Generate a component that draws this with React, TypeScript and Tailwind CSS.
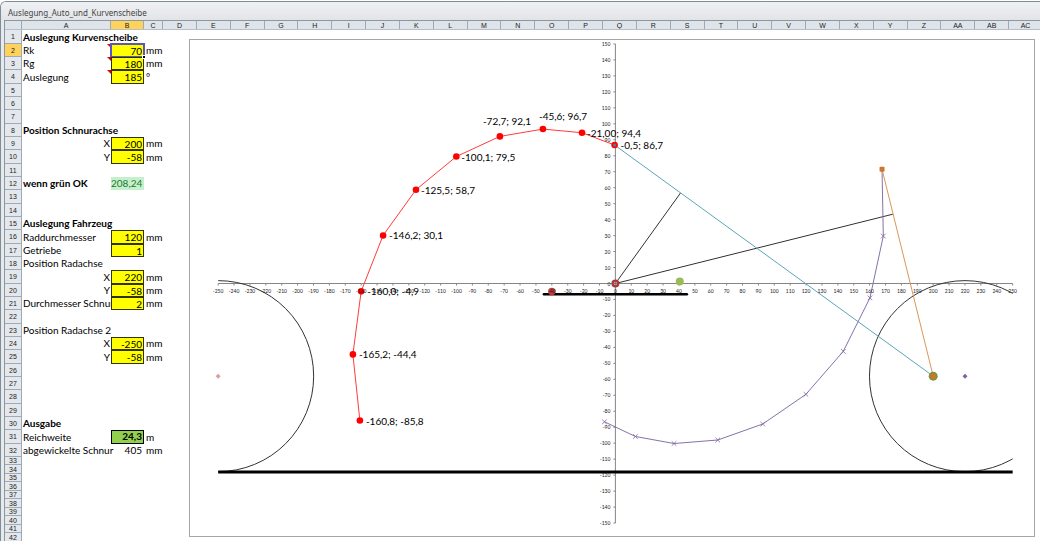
import { useState } from 'react'
import clsx from 'clsx'

type Row = {
    label?: string
    kind?: 'title' | 'axis' | 'clip'
    value?: string
    cell?: 'input' | 'ok' | 'result' | 'plain'
    unit?: string
    note?: boolean
}

const rows: Record<number, Row> = {
    1: { label: 'Auslegung Kurvenscheibe', kind: 'title' },
    2: { label: 'Rk', value: '70', cell: 'input', unit: 'mm', note: true },
    3: { label: 'Rg', value: '180', cell: 'input', unit: 'mm', note: true },
    4: { label: 'Auslegung', value: '185', cell: 'input', unit: '°', note: true },
    8: { label: 'Position Schnurachse', kind: 'title' },
    9: { label: 'X', kind: 'axis', value: '200', cell: 'input', unit: 'mm' },
    10: { label: 'Y', kind: 'axis', value: '-58', cell: 'input', unit: 'mm' },
    12: { label: 'wenn grün OK', kind: 'title', value: '208,24', cell: 'ok' },
    15: { label: 'Auslegung Fahrzeug', kind: 'title' },
    16: { label: 'Raddurchmesser', value: '120', cell: 'input', unit: 'mm' },
    17: { label: 'Getriebe', value: '1', cell: 'input' },
    18: { label: 'Position Radachse' },
    19: { label: 'X', kind: 'axis', value: '220', cell: 'input', unit: 'mm' },
    20: { label: 'Y', kind: 'axis', value: '-58', cell: 'input', unit: 'mm' },
    21: { label: 'Durchmesser Schnura', kind: 'clip', value: '2', cell: 'input', unit: 'mm' },
    23: { label: 'Position Radachse 2' },
    24: { label: 'X', kind: 'axis', value: '-250', cell: 'input', unit: 'mm' },
    25: { label: 'Y', kind: 'axis', value: '-58', cell: 'input', unit: 'mm' },
    30: { label: 'Ausgabe', kind: 'title' },
    31: { label: 'Reichweite', value: '24,3', cell: 'result', unit: 'm' },
    32: { label: 'abgewickelte Schnur', value: '405', cell: 'plain', unit: 'mm' },
}

const rowNumbers = Array.from({ length: 42 }, (_, i) => i + 1)
const wideColumns = [...'DEFGHIJKLMNOPQRSTUVWXYZ', 'AA', 'AB', 'AC']

// chart units -> svg units
const px = (x: number) => 426.4 + x * 1.589
const py = (y: number) => 244.5 - y * 1.597
const toPoints = (points: number[][]) => points.map(([x, y]) => `${px(x)},${py(y)}`).join(' ')

const xTicks = Array.from({ length: 51 }, (_, i) => -250 + i * 10)
const yTicks = Array.from({ length: 31 }, (_, i) => -150 + i * 10)

const redCurve = [
    { x: -160.8, y: -85.8, text: '-160,8; -85,8', dx: 6, dy: 4 },
    { x: -165.2, y: -44.4, text: '-165,2; -44,4', dx: 6, dy: 4 },
    { x: -160, y: -4.9, text: '-160,0; -4,9', dx: 6, dy: 4 },
    { x: -146.2, y: 30.1, text: '-146,2; 30,1', dx: 6, dy: 4 },
    { x: -125.5, y: 58.7, text: '-125,5; 58,7', dx: 5, dy: 4 },
    { x: -100.1, y: 79.5, text: '-100,1; 79,5', dx: 5, dy: 4 },
    { x: -72.7, y: 92.1, text: '-72,7; 92,1', dx: -17, dy: -11 },
    { x: -45.6, y: 96.7, text: '-45,6; 96,7', dx: -4, dy: -9 },
    { x: -21, y: 94.4, text: '-21,00; 94,4', dx: 5, dy: 4 },
    { x: -0.5, y: 86.7, text: '-0,5; 86,7', dx: 6, dy: 4 },
]

const purpleCurve = [
    [167.8, 71.5],
    [168.6, 29.7],
    [160.2, -9],
    [143.4, -42.5],
    [119.9, -69.4],
    [92.7, -88],
    [64.4, -98],
    [36.9, -100.2],
    [12.6, -95.8],
    [-6.9, -86.6],
]

const Diamond = ({ x, y, fill }: { x: number; y: number; fill: string }) => (
    <path d={`M${px(x)} ${py(y) - 2.5}l2.5 2.5l-2.5 2.5l-2.5 -2.5z`} fill={fill} />
)

const Chart = () => (
    <svg
        viewBox="0 0 846 498"
        className="block h-auto w-full bg-white font-['Lato',sans-serif] outline outline-[#a6a6a6] -outline-offset-1"
        role="img"
        aria-label="Kurvenscheibe"
    >
        <defs>
            <clipPath id="plot">
                <rect x={px(-250)} y={py(150)} width={px(250) - px(-250)} height={py(-150) - py(150)} />
            </clipPath>
        </defs>

        <g stroke="#868686" strokeWidth="1">
            <line x1={px(-250)} x2={px(250)} y1={py(0)} y2={py(0)} />
            <line x1={px(0)} x2={px(0)} y1={py(150)} y2={py(-150)} />
            {xTicks.map((x) => (
                <line key={x} x1={px(x)} x2={px(x)} y1={py(0)} y2={py(0) + 2} />
            ))}
            {yTicks.map((y) => (
                <line key={y} x1={px(0) - 2} x2={px(0)} y1={py(y)} y2={py(y)} />
            ))}
        </g>

        <g fill="none" stroke="#333" strokeWidth="1" clipPath="url(#plot)">
            <circle cx={px(-250)} cy={py(-58)} r="95.5" />
            <circle cx={px(220)} cy={py(-58)} r="95.5" />
        </g>
        <line x1={px(-250)} x2={px(250)} y1={py(-118)} y2={py(-118)} stroke="#000" strokeWidth="3" />
        <line
            x1={px(-45)}
            x2={px(45)}
            y1={py(-6.8)}
            y2={py(-6.8)}
            stroke="#000"
            strokeWidth="2.5"
            strokeLinecap="round"
        />

        <polyline points={toPoints([[41, 56.7], [0, 0], [174.6, 43.4]])} fill="none" stroke="#333" />
        <polyline points={toPoints([[-0.5, 86.7], [200, -58]])} fill="none" stroke="#5ba5b8" />
        <polyline points={toPoints(purpleCurve)} fill="none" stroke="#8672a8" />
        {purpleCurve.slice(1).map(([x, y]) => (
            <path
                key={x}
                d={`M${px(x) - 2.3} ${py(y) - 2.3}l4.6 4.6m0 -4.6l-4.6 4.6`}
                stroke="#8064a2"
                strokeWidth="0.8"
            />
        ))}
        <polyline points={toPoints([[167.8, 71.5], [200, -58]])} fill="none" stroke="#db9558" />
        <rect x={px(167.8) - 2.5} y={py(71.5) - 2.5} width="5" height="5" rx="1" fill="#cf7530" />

        <circle cx={px(200)} cy={py(-58)} r="4.5" fill="#77933c" />
        <circle cx={px(200)} cy={py(-58)} r="3" fill="#c9772b" />
        <circle cx={px(40.5)} cy={py(1.3)} r="4" fill="#9bbb59" />
        <circle cx={px(-40)} cy={py(-5)} r="3.7" fill="#c0393b" />
        <circle cx={px(0)} cy={py(0)} r="4" fill="#a93a3c" />
        <circle cx={px(0)} cy={py(0)} r="1.7" fill="#d3b5bd" />
        <path d={`M${px(0) - 1.7} ${py(0)}h3.4m-1.7 -1.7v3.4`} stroke="#555" strokeWidth="0.6" />
        <Diamond x={-250} y={-58} fill="#d99ea0" />
        <Diamond x={220} y={-58} fill="#8064a2" />

        <polyline
            points={toPoints(redCurve.map(({ x, y }) => [x, y]))}
            fill="none"
            stroke="#ff3b3b"
        />
        {redCurve.map(({ x, y }) => (
            <circle key={x} cx={px(x)} cy={py(y)} r="3.3" fill="#f00" />
        ))}
        <circle cx={px(-0.5)} cy={py(86.7)} r="1.6" fill="#4b7f96" />

        <g className="text-[5px]" fill="#222">
            {xTicks.map((x) => (
                <text key={x} x={px(x)} y={py(0) + 9} textAnchor="middle">
                    {x}
                </text>
            ))}
            {yTicks.map((y) => (
                <text key={y} x={px(0) - 5} y={py(y) + 2} textAnchor="end">
                    {y}
                </text>
            ))}
        </g>
        <g className="text-[10px]" fill="#000">
            {redCurve.map(({ x, y, text, dx, dy }) => (
                <text key={text} x={px(x) + dx} y={py(y) + dy}>
                    {text}
                </text>
            ))}
        </g>
    </svg>
)

const ColumnHead = ({ name, className }: { name: string; className: string }) => (
    <div
        className={clsx(
            'flex items-center justify-center border-r border-[#9eabb6] leading-none',
            className,
        )}
    >
        {name}
    </div>
)

const ValueCell = ({ row, number }: { row: Row; number: number }) => {
    const [value, setValue] = useState(row.value ?? '')

    if (row.cell === 'input') {
        return (
            <div className="relative h-full">
                <input
                    className={clsx(
                        'block h-full w-full bg-[#ffff00] pr-0.5 text-right leading-3 outline -outline-offset-1',
                        number === 2 ? 'outline-2 outline-[#5a55c0]' : 'outline-1 outline-black/80',
                    )}
                    aria-label={`B${number} ${row.label}`}
                    value={value}
                    onChange={(event) => setValue(event.target.value)}
                />
                {number === 2 && (
                    <span className="absolute -right-0.5 -bottom-0.5 z-10 size-1 border border-white bg-black" />
                )}
            </div>
        )
    }
    return (
        <div
            className={clsx(
                'h-full pr-0.5 text-right',
                row.cell === 'ok' && 'bg-[#c6efce] text-[#1c7a2c]',
                row.cell === 'result' && 'bg-[#92d050] font-bold outline outline-black -outline-offset-1',
            )}
        >
            {row.value}
        </div>
    )
}

const SheetRow = ({ number }: { number: number }) => {
    const row = rows[number] ?? {}
    const small = number > 32

    return (
        <tr className={clsx(small ? 'h-2 even:h-[9px]' : 'h-[13px] nth-[3n+1]:h-[14px]')}>
            <th
                scope="row"
                className={clsx(
                    "border-r border-b border-[#9eabb6] p-0 text-center font-['Liberation_Sans',sans-serif] text-[7px] leading-[7px] font-normal text-[#222]",
                    number === 2 ? 'bg-[#ffd35b]' : 'bg-[#e4e8ed]',
                )}
            >
                {number}
            </th>
            <td className="relative p-0">
                <div
                    className={clsx(
                        'pl-px whitespace-nowrap',
                        row.kind === 'title' && 'font-bold',
                        row.kind === 'axis' && 'pr-px text-right',
                        row.kind === 'clip' && 'overflow-hidden',
                    )}
                >
                    {row.label}
                </div>
                {row.note && (
                    <span className="absolute top-0 right-0 border-t-4 border-l-4 border-t-[#e00000] border-l-transparent" />
                )}
            </td>
            <td className="h-px p-0">{row.cell && <ValueCell row={row} number={number} />}</td>
            <td className="p-0 pl-0.5">{row.unit}</td>
        </tr>
    )
}

export default function App() {
    return (
        <main className="flex h-screen flex-col overflow-hidden bg-white pt-px font-['Lato',sans-serif] text-[10px] leading-[13px] text-black">
            <div className="flex min-h-0 flex-1 flex-col overflow-hidden rounded-tl-md border-t border-l border-[#7f8d94] bg-[#e6e9ee]">
                <header className="flex h-[18px] shrink-0 items-center bg-linear-to-b from-[#f0f1f4] to-[#e2e4e8] pt-1 pl-[7px]">
                    <h1 className="font-['Noto_Sans',sans-serif] text-[8px] leading-3 text-[#444]">
                        Auslegung_Auto_und_Kurvenscheibe
                    </h1>
                </header>

                <div className="ml-[3px] flex min-h-0 flex-1 flex-col border-t border-l border-[#8b999f] bg-white">
                    <div className="flex h-[9px] shrink-0 overflow-hidden border-b border-[#b5bfc9] bg-[#dfe4ea] font-['Liberation_Sans',sans-serif] text-[7px] text-[#222]">
                        <ColumnHead name="" className="w-[17px] shrink-0" />
                        <ColumnHead name="A" className="w-[89px] shrink-0" />
                        <ColumnHead name="B" className="w-[33px] shrink-0 bg-[#ffd35b]" />
                        <ColumnHead name="C" className="w-[19px] shrink-0" />
                        <div className="-mr-[3px] flex flex-1">
                            {wideColumns.map((name) => (
                                <ColumnHead key={name} name={name} className="min-w-0 flex-1" />
                            ))}
                        </div>
                    </div>

                    <div className="flex items-start">
                        <table className="w-[158px] shrink-0 table-fixed border-separate border-spacing-0">
                            <colgroup>
                                <col className="w-[17px]" />
                                <col className="w-[89px]" />
                                <col className="w-[33px]" />
                                <col className="w-[19px]" />
                            </colgroup>
                            <tbody>
                                {rowNumbers.map((number) => (
                                    <SheetRow key={number} number={number} />
                                ))}
                            </tbody>
                        </table>
                        <div className="min-w-0 flex-1 pt-[9px] pr-[5px] pl-[26px]">
                            <Chart />
                        </div>
                    </div>
                </div>
            </div>
        </main>
    )
}
